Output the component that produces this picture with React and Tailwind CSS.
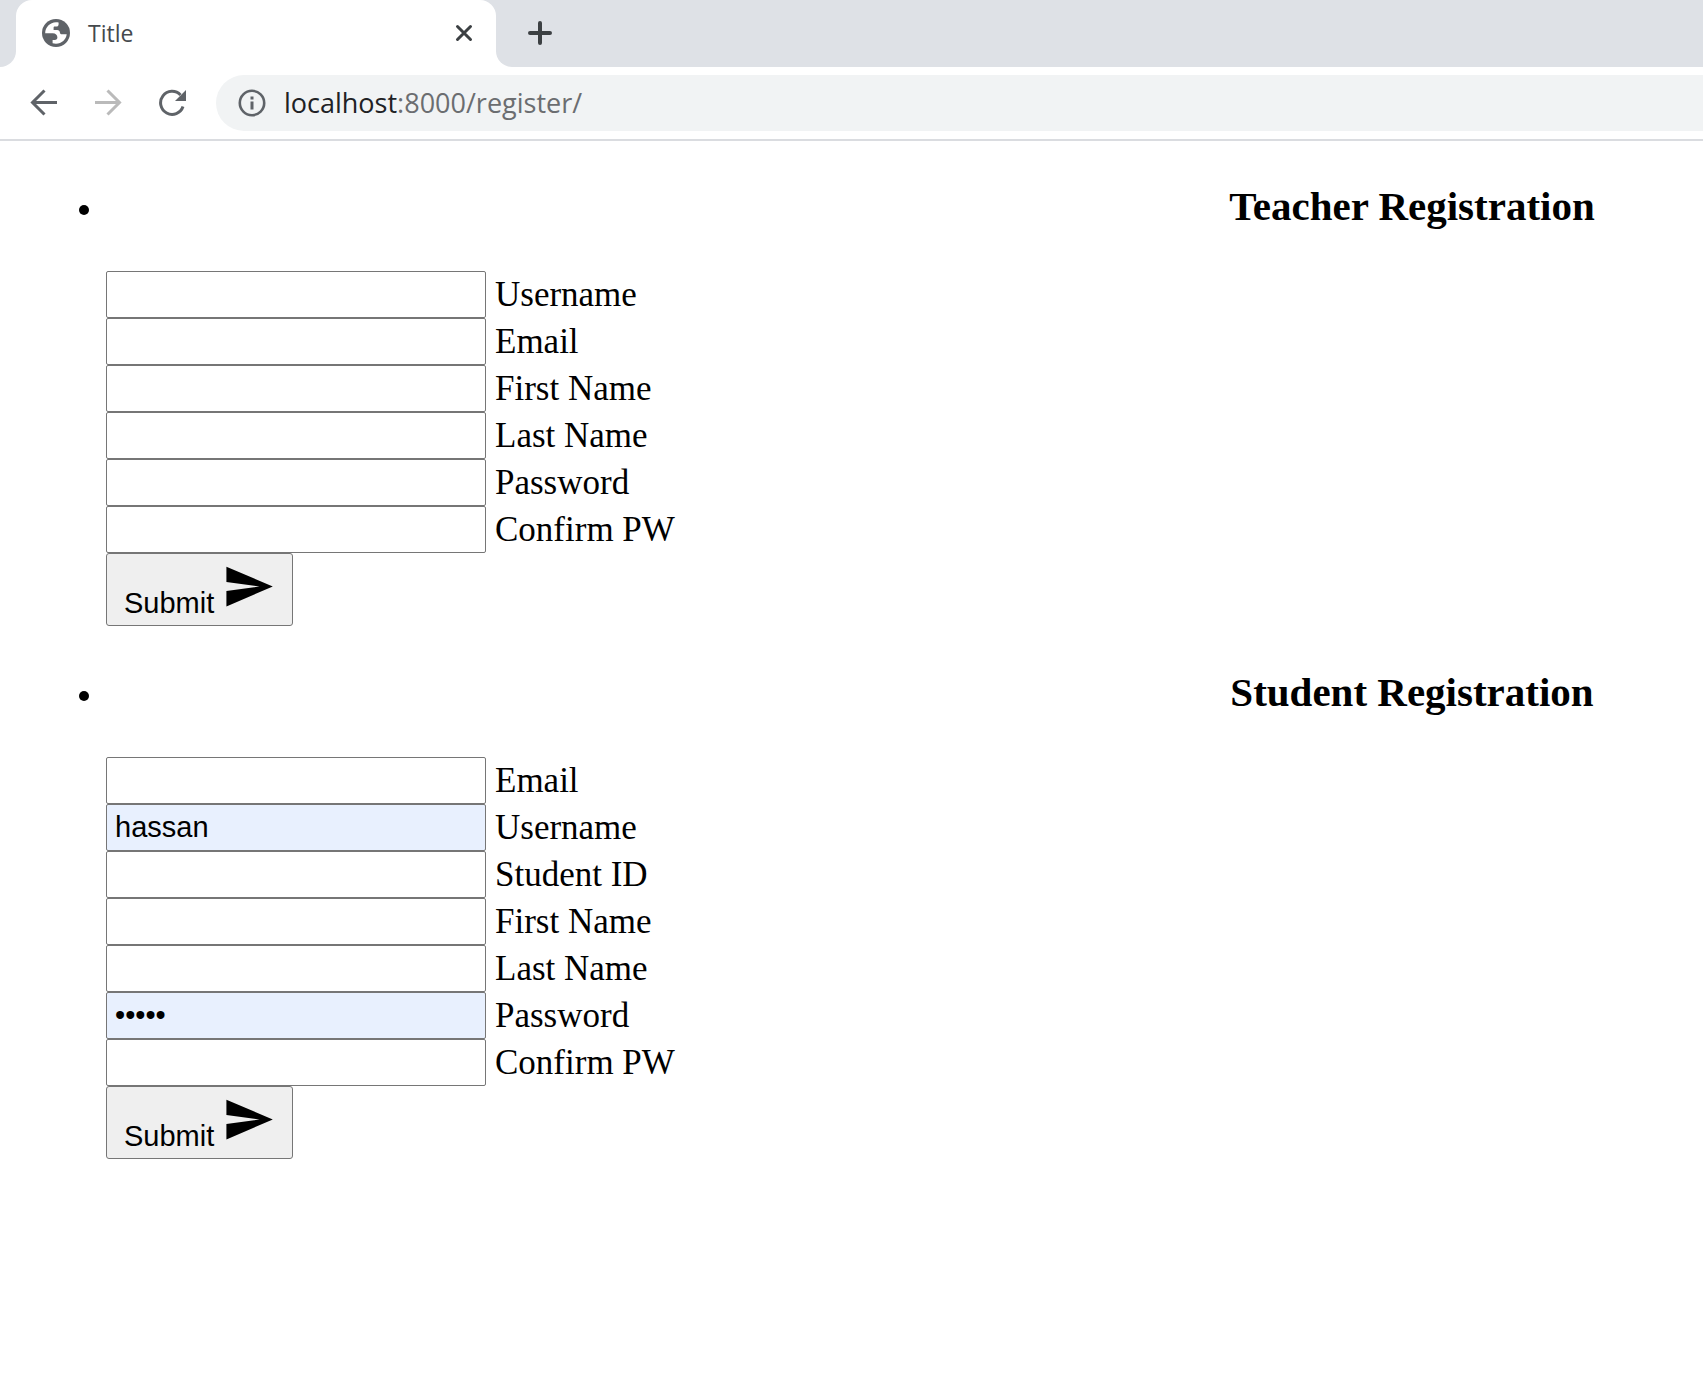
import React, { useId } from "react";

const teacherFields = [
  { label: "Username", type: "text" },
  { label: "Email", type: "email" },
  { label: "First Name", type: "text" },
  { label: "Last Name", type: "text" },
  { label: "Password", type: "password" },
  { label: "Confirm PW", type: "password" },
];

const studentFields = [
  { label: "Email", type: "email" },
  { label: "Username", type: "text", value: "hassan" },
  { label: "Student ID", type: "text" },
  { label: "First Name", type: "text" },
  { label: "Last Name", type: "text" },
  { label: "Password", type: "password", value: "admin" },
  { label: "Confirm PW", type: "password" },
];

function GlobeIcon() {
  return (
    <svg viewBox="0 0 28 28" className="size-7 shrink-0" aria-hidden="true">
      <circle cx="14" cy="14" r="14" fill="#5f6368" />
      <path
        fill="#fff"
        d="M3.200 14.200C3.200 8.200 8 3.200 14 3.200c1 0 1.800.1 2.600.3v1.700c0 1.500-.9 2.300-2.300 2.300h-1.500c-.8 0-1.200.5-1.200 1.200v2.400h3.600c1.600 0 2.600 1 2.700 2.300.1 1.200.9 1.900 2.300 1.900h4.500c-.6 5.200-5 9.500-10.700 9.500-1.300 0-2.400-.2-3.400-.5v-3.400h2.200c1.600 0 2.600-1 2.600-2.500 0-2.400-1.800-4.200-4.600-4.200z"
      />
    </svg>
  );
}

function ToolbarButton({ label, className, children }) {
  return (
    <button type="button" aria-label={label} className={className}>
      <svg viewBox="0 0 28 28" className="size-7" fill="none" stroke="currentColor" strokeWidth="3" aria-hidden="true">
        {children}
      </svg>
    </button>
  );
}

function BrowserChrome() {
  return (
    <header className="font-['Open_Sans','Noto_Sans',sans-serif]">
      <div className="flex h-[67px] bg-[#dee1e6]">
        <div className="w-4 bg-white">
          <div className="h-full rounded-br-2xl bg-[#dee1e6]" />
        </div>
        <div className="flex w-[480px] items-center rounded-t-2xl bg-white pr-[22px] pb-px pl-[26px]">
          <GlobeIcon />
          <span className="ml-[18px] flex-1 text-[23px] leading-8 text-[#45494d]">Title</span>
          <button type="button" aria-label="Close tab" className="text-[#3c4043]">
            <svg viewBox="0 0 20 20" className="size-5" fill="none" stroke="currentColor" strokeWidth="3" strokeLinecap="round" aria-hidden="true">
              <path d="M3.500 3.500l13 13M16.500 3.500l-13 13" />
            </svg>
          </button>
        </div>
        <div className="flex-1 bg-white">
          <div className="flex h-full items-center rounded-bl-2xl bg-[#dee1e6] pb-px pl-8">
            <button type="button" aria-label="New tab" className="text-[#3c4043]">
              <svg viewBox="0 0 24 24" className="size-6" fill="none" stroke="currentColor" strokeWidth="4" strokeLinecap="round" aria-hidden="true">
                <path d="M12 2v20M2 12h20" />
              </svg>
            </button>
          </div>
        </div>
      </div>
      <nav className="flex items-center border-b-2 border-[#dadce0] bg-white pt-2 pb-2 pl-[30px]">
        <div className="flex w-[186px] gap-9">
          <ToolbarButton label="Back" className="text-[#5f6368]">
            <path d="M27 13.500H3M14.500 1.500l-12 12 12 12" />
          </ToolbarButton>
          <ToolbarButton label="Forward" className="text-[#bababa]">
            <path d="M1 13.500h24M13.500 1.500l12 12-12 12" />
          </ToolbarButton>
          <ToolbarButton label="Reload" className="text-[#5f6368]">
            <path d="M25 17.500A11.500 11.500 0 1 1 22.500 6" />
            <path d="M28 1v11H17z" fill="currentColor" stroke="none" />
          </ToolbarButton>
        </div>
        <div className="flex h-14 flex-1 items-center rounded-l-full bg-[#f1f3f4] pl-[22px]">
          <svg viewBox="0 0 28 28" className="size-7" aria-hidden="true">
            <circle cx="14" cy="14" r="12.200" fill="none" stroke="#5f6368" strokeWidth="2.600" />
            <path d="M12.500 7.500h3v3h-3zM12.500 12.500h3v8h-3z" fill="#5f6368" />
          </svg>
          <span className="ml-[18px] text-[27px] leading-9 text-[#6b6d70]">
            <span className="text-[#202124]">localhost</span>:8000/register/
          </span>
        </div>
      </nav>
    </header>
  );
}

function Field({ label, type, value }) {
  const id = useId();
  return (
    <div className="flex h-[47px] items-center gap-[9px]">
      <input
        id={id}
        type={type}
        defaultValue={value}
        className={
          value
            ? "h-full w-[380px] rounded-[2px] border border-[#767676] bg-[#e8f0fe] px-2 font-['Liberation_Sans',sans-serif] text-[29px] text-black"
            : "h-full w-[380px] rounded-[2px] border border-[#767676] bg-white px-2 font-['Liberation_Sans',sans-serif] text-[29px] text-black"
        }
      />
      <label htmlFor={id} className="leading-[40px]">
        {label}
      </label>
    </div>
  );
}

function Registration({ title, fields }) {
  return (
    <li>
      <h3 className="ml-auto w-[366px] text-center text-[41px] leading-[48px] font-bold whitespace-nowrap">
        {title}
      </h3>
      <form className="mt-[41px] pr-4">
        {fields.map((field) => (
          <Field key={field.label} {...field} />
        ))}
        <button
          type="button"
          className="block rounded-[3px] border border-[#767676] bg-[#efefef] px-[17px] pt-[6px] pb-[5px] font-['Liberation_Sans',sans-serif] text-[29px] leading-[33px]"
        >
          Submit{" "}
          <svg viewBox="0 0 24 24" className="inline size-[53px] align-baseline" fill="currentColor" aria-hidden="true">
            <path d="M2 21L23 12 2 3v7l15 2-15 2z" />
          </svg>
        </button>
      </form>
    </li>
  );
}

export default function App() {
  return (
    <div className="min-h-screen bg-white text-black">
      <BrowserChrome />
      <main className="pt-[41px] pr-[108px] pb-10 pl-[106px] font-['Liberation_Serif',serif]">
        <ul className="flex list-disc flex-col gap-[42px] text-[35px]">
          <Registration title="Teacher Registration" fields={teacherFields} />
          <Registration title="Student Registration" fields={studentFields} />
        </ul>
      </main>
    </div>
  );
}
